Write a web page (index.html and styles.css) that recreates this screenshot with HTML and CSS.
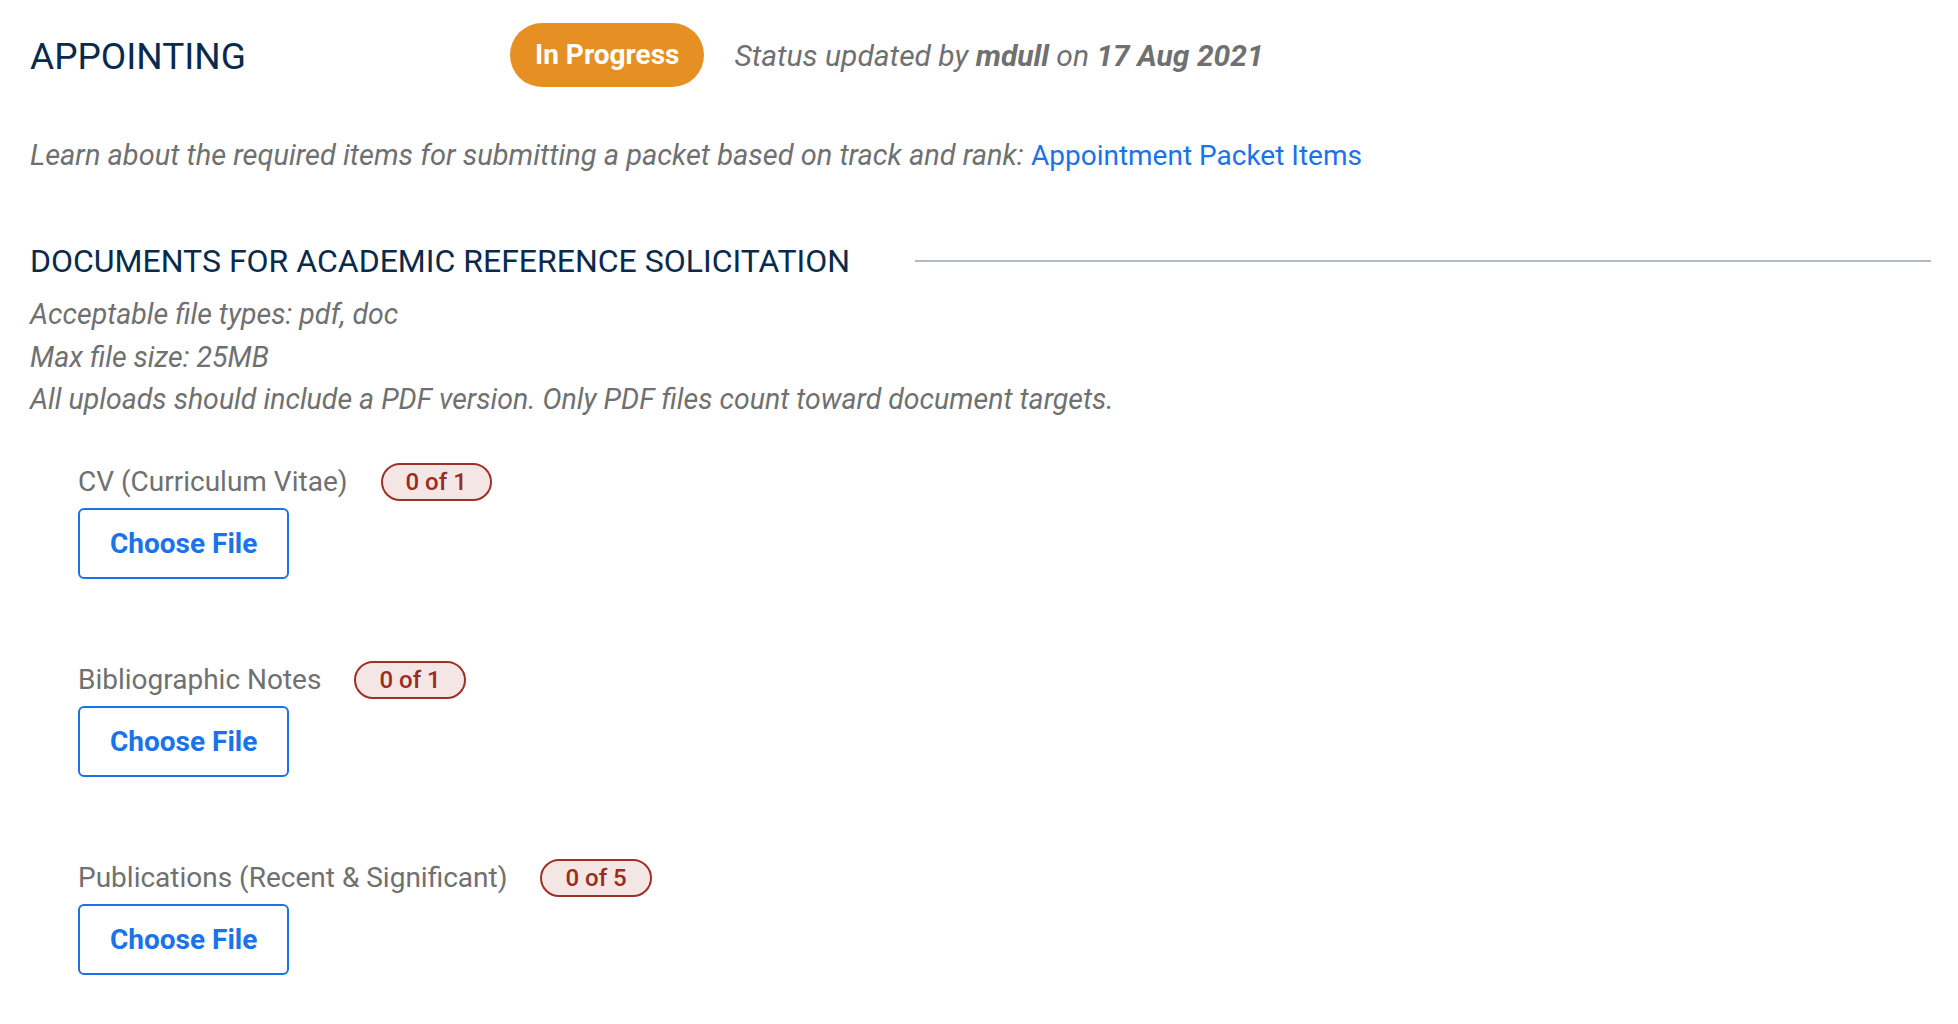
FILE: index.html
```html
<!DOCTYPE html>
<html lang="en">
<head>
    <meta charset="UTF-8">
    <meta name="viewport" content="width=device-width, initial-scale=1.0">
    <title>Appointing Packet</title>
    <link rel="stylesheet" href="styles.css">
</head>
<body>
    <div class="packet">
        <div class="status-row">
            <h1 class="stage">APPOINTING</h1>
            <span class="pill">In Progress</span>
            <span class="status-note">Status updated by <b>mdull</b> on <b>17 Aug 2021</b></span>
        </div>

        <p class="intro">Learn about the required items for submitting a packet based on track and rank: <a href="#">Appointment Packet Items</a></p>

        <section class="docs">
            <div class="section-head">
                <h2>DOCUMENTS FOR ACADEMIC REFERENCE SOLICITATION</h2>
                <span class="rule"></span>
            </div>
            <div class="file-rules">
                <p>Acceptable file types: pdf, doc</p>
                <p>Max file size: 25MB</p>
                <p>All uploads should include a PDF version. Only PDF files count toward document targets.</p>
            </div>

            <div class="doc-list">
                <div class="doc-item">
                    <div class="doc-label">
                        <span>CV (Curriculum Vitae)</span>
                        <span class="count">0 of 1</span>
                    </div>
                    <button class="choose">Choose File</button>
                </div>
                <div class="doc-item">
                    <div class="doc-label">
                        <span>Bibliographic Notes</span>
                        <span class="count">0 of 1</span>
                    </div>
                    <button class="choose">Choose File</button>
                </div>
                <div class="doc-item">
                    <div class="doc-label">
                        <span>Publications (Recent &amp; Significant)</span>
                        <span class="count">0 of 5</span>
                    </div>
                    <button class="choose">Choose File</button>
                </div>
            </div>
        </section>
    </div>
</body>
</html>
```

FILE: styles.css
```css
body {
    margin: 0;
    background-color: #fff;
    font-family: Roboto, 'Liberation Sans', sans-serif;
    color: #707070;
}

.packet {
    padding: 23px 27px 0 30px;
}

.status-row {
    display: flex;
    align-items: center;
    height: 64px;
}

.stage {
    width: 480px;
    margin: 0;
    padding-top: 2px;
    font-size: 37px;
    font-weight: 400;
    color: #0a2a4d;
}

.pill {
    display: inline-block;
    height: 64px;
    line-height: 64px;
    padding: 0 25px;
    border-radius: 32px;
    background-color: #e69024;
    color: #fff;
    font-size: 28px;
    font-weight: 700;
}

.status-note {
    margin-left: 30px;
    font-size: 30px;
    font-style: italic;
}

.intro {
    margin: 48px 0 0;
    font-size: 29px;
    line-height: 40px;
    font-style: italic;
}

.intro a {
    color: #1a73e8;
    font-size: 28px;
    font-style: normal;
    text-decoration: none;
}

.section-head {
    display: flex;
    align-items: center;
    gap: 65px;
    margin-top: 66px;
}

.section-head h2 {
    margin: 0;
    font-size: 32px;
    line-height: 38px;
    font-weight: 400;
    color: #0a2a4d;
}

.rule {
    flex: 1;
    height: 2px;
    background-color: #b0bac6;
}

.file-rules {
    margin-top: 14px;
}

.file-rules p {
    margin: 0;
    font-size: 28.5px;
    line-height: 42.5px;
    font-style: italic;
}

.doc-list {
    display: flex;
    flex-direction: column;
    gap: 82px;
    margin-top: 41px;
    padding-left: 48px;
}

.doc-item {
    display: flex;
    flex-direction: column;
    align-items: flex-start;
    gap: 7px;
}

.doc-label {
    display: flex;
    align-items: center;
    gap: 33px;
    font-size: 28px;
}

.count {
    padding: 3px 23px;
    line-height: 28px;
    border: 2px solid #9e3126;
    border-radius: 19px;
    background-color: #f3e6e5;
    color: #9a2c20;
    font-size: 24px;
    font-weight: 500;
}

.choose {
    padding: 17px 30px;
    line-height: 33px;
    border: 2px solid #1a73e8;
    border-radius: 6px;
    background-color: #fff;
    color: #1a73e8;
    font-family: Roboto, 'Liberation Sans', sans-serif;
    font-size: 28px;
    font-weight: 700;
    cursor: pointer;
}
```
